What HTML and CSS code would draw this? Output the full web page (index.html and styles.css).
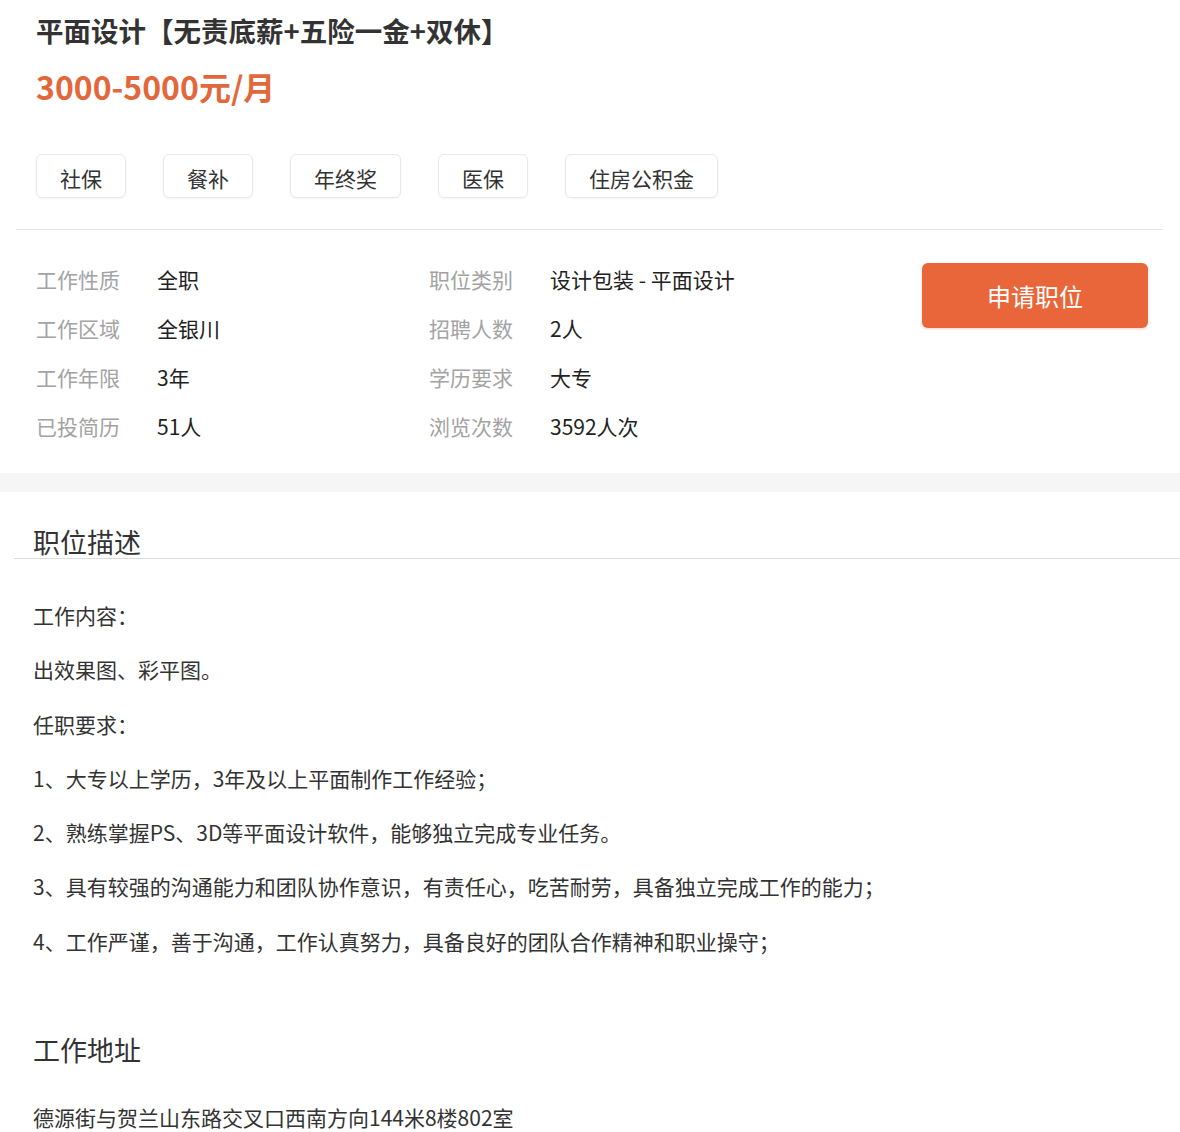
FILE: index.html
```html
<!DOCTYPE html>
<html lang="zh-CN">
    <head>
        <meta charset="utf-8">
        <title>平面设计</title>
        <link rel="stylesheet" href="styles.css">
    </head>
    <body>
        <div class="job-head">
            <h1 class="job-title">平面设计【无责底薪+五险一金+双休】</h1>
            <div class="salary">3000-5000元/月</div>
            <ul class="tags">
                <li>社保</li>
                <li>餐补</li>
                <li>年终奖</li>
                <li>医保</li>
                <li>住房公积金</li>
            </ul>
        </div>

        <div class="divider"></div>

        <div class="job-info">
            <dl class="info-grid">
                <dt>工作性质</dt><dd>全职</dd>
                <dt>职位类别</dt><dd>设计包装 - 平面设计</dd>
                <dt>工作区域</dt><dd>全银川</dd>
                <dt>招聘人数</dt><dd>2人</dd>
                <dt>工作年限</dt><dd>3年</dd>
                <dt>学历要求</dt><dd>大专</dd>
                <dt>已投简历</dt><dd>51人</dd>
                <dt>浏览次数</dt><dd>3592人次</dd>
            </dl>
            <a class="apply-btn" href="#">申请职位</a>
        </div>

        <div class="band"></div>

        <div class="section">
            <h2 class="section-title underline">职位描述</h2>
            <div class="section-body">
                <p>工作内容：</p>
                <p>出效果图、彩平图。</p>
                <p>任职要求：</p>
                <p>1、大专以上学历，3年及以上平面制作工作经验；</p>
                <p>2、熟练掌握PS、3D等平面设计软件，能够独立完成专业任务。</p>
                <p>3、具有较强的沟通能力和团队协作意识，有责任心，吃苦耐劳，具备独立完成工作的能力；</p>
                <p>4、工作严谨，善于沟通，工作认真努力，具备良好的团队合作精神和职业操守；</p>
            </div>
        </div>

        <div class="section address">
            <h2 class="section-title">工作地址</h2>
            <div class="section-body">
                <p>德源街与贺兰山东路交叉口西南方向144米8楼802室</p>
            </div>
        </div>
    </body>
</html>
```

FILE: styles.css
```css
*{ padding: 0px; margin: 0px; box-sizing: border-box; }

html, body
{
    background: #fff;
    width: 100%;
}

body
{
    font-family: "Noto Sans CJK SC", "Noto Sans", sans-serif;
    color: #333;
}

.job-head
{
    padding: 10px 36px 0 36px;
}

.job-title
{
    font-size: 27.5px;
    line-height: 40px;
    font-weight: bold;
    color: #333;
}

.salary
{
    margin-top: 14px;
    font-size: 32px;
    line-height: 44px;
    font-weight: bold;
    color: #e2683c;
}

.tags
{
    list-style: none;
    display: flex;
    gap: 37px;
    margin-top: 46px;
}

.tags li
{
    height: 44px;
    line-height: 38px;
    padding: 4px 23px 0 23px;
    font-size: 21px;
    color: #333;
    border: 1px solid #e8e8e8;
    border-radius: 6px;
    box-shadow: 0 1px 2px rgba(0,0,0,.04);
}

.divider
{
    margin: 31px 17px 0 16px;
    height: 1px;
    background: #e6e6e6;
}

.job-info
{
    display: flex;
    justify-content: space-between;
    align-items: flex-start;
    padding: 25px 32px 22px 36px;
}

.info-grid
{
    display: grid;
    grid-template-columns: 121px 272px 121px auto;
    font-size: 21px;
    line-height: 49px;
}

.info-grid dt
{
    color: #a3a3a3;
}

.info-grid dd
{
    color: #222;
}

.apply-btn
{
    display: block;
    width: 226px;
    height: 65px;
    margin-top: 8px;
    line-height: 65px;
    text-align: center;
    background: #e9663a;
    color: #fff;
    font-size: 24px;
    text-decoration: none;
    border-radius: 6px;
    box-shadow: 0 1px 3px rgba(233,102,58,.3);
}

.band
{
    height: 19px;
    background: #f6f6f6;
}

.section
{
    padding-top: 33px;
}

.section-title
{
    font-size: 27px;
    line-height: 33px;
    font-weight: normal;
    color: #333;
    padding-left: 33px;
}

.section-title.underline
{
    margin-left: 14px;
    padding-left: 19px;
    border-bottom: 1px solid #dcdcdc;
}

.section-body
{
    padding: 41px 0 0 33px;
}

.section-body p
{
    font-size: 21px;
    line-height: 30px;
    color: #333;
    margin-bottom: 24.3px;
}

.section-body p:last-child
{
    margin-bottom: 0;
}

.address
{
    padding-top: 77px;
}

.address .section-body
{
    padding-top: 36px;
}
```
